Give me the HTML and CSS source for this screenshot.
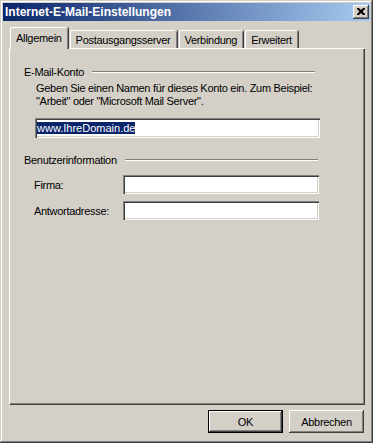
FILE: index.html
```html
<!DOCTYPE html>
<html lang="de">
<head>
    <meta charset="UTF-8">
    <title>Internet-E-Mail-Einstellungen</title>
    <link rel="stylesheet" href="styles.css">
</head>
<body>
    <div class="window">
        <div class="titlebar">
            <span class="title">Internet-E-Mail-Einstellungen</span>
            <span class="close">
                <svg width="8" height="7" viewBox="0 0 8 7">
                    <path d="M0 0h2l2 2 2-2h2v1l-2.5 2.5L8 6v1H6L4 5 2 7H0V6l2.5-2.5L0 1z" fill="#000"/>
                </svg>
            </span>
        </div>

        <div class="content">
            <div class="tabs">
                <div class="tab active">Allgemein</div>
                <div class="tab">Postausgangsserver</div>
                <div class="tab">Verbindung</div>
                <div class="tab">Erweitert</div>
            </div>

            <div class="panel">
                <div class="group-head">
                    <span>E-Mail-Konto</span>
                    <span class="etch"></span>
                </div>
                <p class="desc">Geben Sie einen Namen für dieses Konto ein. Zum Beispiel:<br>"Arbeit" oder "Microsoft Mail Server".</p>
                <div class="field account"><span class="selected">www.IhreDomain.de</span></div>

                <div class="group-head second">
                    <span>Benutzerinformation</span>
                    <span class="etch"></span>
                </div>
                <div class="row first">
                    <label>Firma:</label>
                    <div class="field"></div>
                </div>
                <div class="row">
                    <label>Antwortadresse:</label>
                    <div class="field"></div>
                </div>
            </div>

            <div class="buttons">
                <button class="btn default">OK</button>
                <button class="btn">Abbrechen</button>
            </div>
        </div>
    </div>
</body>
</html>
```

FILE: styles.css
```css
body {
    margin: 0;
    font-family: "Liberation Sans", Arial, sans-serif;
    font-size: 11px;
    letter-spacing: -0.3px;
    color: #000;
    background: #d4d0c8;
}
.window {
    width: 373px;
    height: 443px;
    box-sizing: border-box;
    padding: 3px;
    background: #d4d0c8;
    box-shadow: inset -1px -1px #404040, inset 1px 1px #d4d0c8, inset -2px -2px #808080, inset 2px 2px #fff;
    display: flex;
    flex-direction: column;
}
.titlebar {
    height: 18px;
    display: flex;
    align-items: center;
    justify-content: space-between;
    padding: 0 1px 0 2px;
    background: linear-gradient(to right, #0a246a, #a6caf0);
}
.title {
    color: #fff;
    font-weight: bold;
    font-size: 12px;
    letter-spacing: 0;
}
.close {
    width: 16px;
    height: 14px;
    box-sizing: border-box;
    background: #d4d0c8;
    box-shadow: inset -1px -1px #404040, inset 1px 1px #fff, inset -2px -2px #808080;
    display: flex;
    align-items: center;
    justify-content: center;
    padding-bottom: 1px;
}
.content {
    flex: 1;
    padding: 6px 5px 0 6px;
    display: flex;
    flex-direction: column;
}
.tabs {
    display: flex;
    align-items: flex-end;
    height: 21px;
    padding-left: 1px;
}
.tab {
    height: 18px;
    box-sizing: border-box;
    padding: 3px 6px 0 5px;
    margin-right: 2px;
    border-left: 1px solid #fff;
    border-top: 1px solid #fff;
    border-radius: 2px 2px 0 0;
    box-shadow: inset -1px 0 #808080, 1px 0 #404040;
}
.tab.active {
    position: relative;
    z-index: 1;
    height: 22px;
    margin-bottom: -1px;
    padding: 4px 6px 0 5px;
    background: #d4d0c8;
}
.panel {
    height: 356px;
    box-sizing: border-box;
    padding: 0 0 0 14px;
    border-left: 1px solid #fff;
    border-top: 1px solid #fff;
    box-shadow: inset -1px -1px #808080, 1px 1px #404040;
    margin-right: 1px;
}
.group-head {
    display: flex;
    align-items: center;
    height: 12px;
    margin-top: 17px;
    width: 291px;
}
.group-head.second {
    margin-top: 16px;
    width: 294px;
}
.etch {
    flex: 1;
    margin-left: 8px;
    height: 1px;
    background: #808080;
    border-bottom: 1px solid #fff;
}
.desc {
    margin: 4px 0 0 12px;
    line-height: 13px;
}
.field {
    height: 20px;
    box-sizing: border-box;
    background: #fff;
    box-shadow: inset 1px 1px #808080, inset 2px 2px #404040, inset -1px -1px #fff, inset -2px -2px #d4d0c8;
    padding: 3px 2px 0 2px;
    line-height: 14px;
}
.field.account {
    width: 285px;
    margin: 10px 0 0 11px;
}
.selected {
    background: #0a246a;
    color: #fff;
    letter-spacing: 0;
}
.row {
    display: flex;
    align-items: center;
    margin-top: 7px;
}
.row.first {
    margin-top: 9px;
}
.row label {
    width: 89px;
    margin-left: 10px;
}
.row .field {
    width: 196px;
    height: 19px;
}
.buttons {
    display: flex;
    justify-content: flex-end;
    gap: 6px;
    margin-top: 6px;
    padding-right: 1px;
}
.btn {
    width: 75px;
    height: 23px;
    font-family: inherit;
    font-size: 11px;
    letter-spacing: inherit;
    color: #000;
    background: #d4d0c8;
    border: none;
    padding: 0;
    box-shadow: inset -1px -1px #404040, inset 1px 1px #fff, inset -2px -2px #808080, inset 2px 2px #d4d0c8;
}
.btn.default {
    border: 1px solid #000;
    box-shadow: inset -1px -1px #404040, inset 1px 1px #fff, inset -2px -2px #808080;
}
```
